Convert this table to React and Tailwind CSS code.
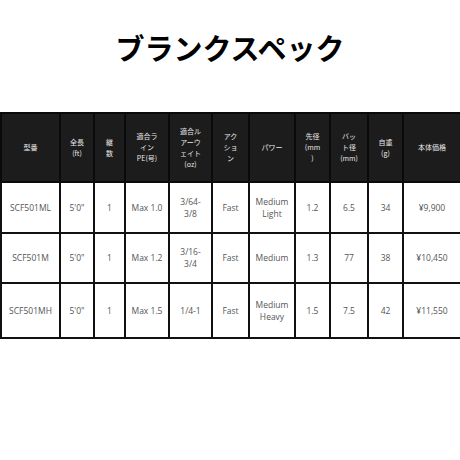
const cols = [59, 34, 31, 44, 43, 37, 46, 35, 38, 35, 58];

const headers = [
  ["型番"],
  ["全長", "(ft)"],
  ["継", "数"],
  ["適合ラ", "イン", "PE(号)"],
  ["適合ル", "アーウ", "ェイト", "(oz)"],
  ["アク", "ショ", "ン"],
  ["パワー"],
  ["先径", "(mm", ")"],
  ["バッ", "ト径", "(mm)"],
  ["自重", "(g)"],
  ["本体価格"],
];

const rows = [
  { h: "h-[51px]", cells: [["SCF501ML"], ["5'0\""], ["1"], ["Max 1.0"], ["3/64-", "3/8"], ["Fast"], ["Medium", "Light"], ["1.2"], ["6.5"], ["34"], ["¥9,900"]] },
  { h: "h-[50px]", cells: [["SCF501M"], ["5'0\""], ["1"], ["Max 1.2"], ["3/16-", "3/4"], ["Fast"], ["Medium"], ["1.3"], ["77"], ["38"], ["¥10,450"]] },
  { h: "h-[55px]", cells: [["SCF501MH"], ["5'0\""], ["1"], ["Max 1.5"], ["1/4-1"], ["Fast"], ["Medium", "Heavy"], ["1.5"], ["7.5"], ["42"], ["¥11,550"]] },
];

export default function App() {
  return (
    <div className="h-[460px] w-[460px] overflow-hidden bg-white">
      <h1 className="pt-[27px] text-center text-[29px] font-bold leading-[40px] text-black [font-family:'Noto_Sans_CJK_JP',sans-serif]">
        ブランクスペック
      </h1>
      <table className="mt-[45px] w-[461px] table-fixed border-collapse">
        <colgroup>
          {cols.map((w, i) => (
            <col key={i} style={{ width: w }} />
          ))}
        </colgroup>
        <thead>
          <tr className="h-[69px] bg-[#1c1c1c]">
            {headers.map((lines, i) => (
              <th
                key={i}
                className="border-2 border-[#0a0a0a] p-0 text-center align-middle text-[7px] font-normal leading-[11px] text-[#e8e8e8] [font-family:'Noto_Sans_CJK_JP',sans-serif]"
              >
                {lines.map((l, j) => (
                  <div key={j}>{l}</div>
                ))}
              </th>
            ))}
          </tr>
        </thead>
        <tbody>
          {rows.map((r, i) => (
            <tr key={i} className={r.h}>
              {r.cells.map((lines, j) => (
                <td
                  key={j}
                  className="border-2 border-[#111] p-0 text-center align-middle text-[8.5px] leading-[12px] text-[#555] [font-family:'Liberation_Sans_Narrow','Open_Sans',sans-serif]"
                >
                  {lines.map((l, k) => (
                    <div key={k}>{l}</div>
                  ))}
                </td>
              ))}
            </tr>
          ))}
        </tbody>
      </table>
    </div>
  );
}
